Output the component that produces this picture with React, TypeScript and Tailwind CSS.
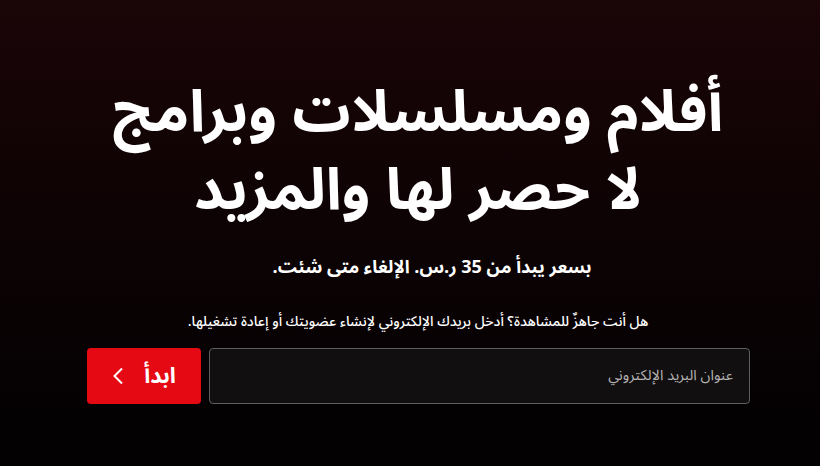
import React from "react";

export default function App() {
  return (
    <div
      dir="rtl"
      className="w-[820px] h-[466px] overflow-hidden bg-gradient-to-b from-[#1a0507] to-[#030102] text-white flex flex-col items-center pl-[16px]"
      style={{ fontFamily: '"Noto Sans Arabic", "DejaVu Sans", "Noto Sans", sans-serif' }}
    >
      <h1 className="mt-[74px] text-center text-[58px] font-bold leading-[78px]">
        أفلام ومسلسلات وبرامج
        <br />
        لا حصر لها والمزيد
      </h1>
      <p className="mt-[24px] pl-[28px] text-[18px] font-bold leading-[26px]">بسعر يبدأ من 35 ر.س. الإلغاء متى شئت.</p>
      <p className="mt-[32px] text-[14px] font-medium leading-[20px]">هل أنت جاهزٌ للمشاهدة؟ أدخل بريدك الإلكتروني لإنشاء عضويتك أو إعادة تشغيلها.</p>
      <div className="mt-[16px] flex gap-[8px] w-[664px] pl-[1px]">
        <div className="flex-1 h-[56px] rounded-[4px] border border-[#5f5f5f] bg-[#141112]/90 flex items-center px-[16px] text-[14.5px] text-[#b3b3b3]">
          عنوان البريد الإلكتروني
        </div>
        <button className="w-[114px] h-[56px] rounded-[4px] bg-[#e50914] flex items-center justify-center gap-[18px] text-[22px] font-bold">
          <span>ابدأ</span>
          <svg width="14" height="22" viewBox="0 0 14 22" fill="none" stroke="white" strokeWidth="2">
            <path d="M10 3.5 L2.5 11 L10 18.5" />
          </svg>
        </button>
      </div>
    </div>
  );
}
